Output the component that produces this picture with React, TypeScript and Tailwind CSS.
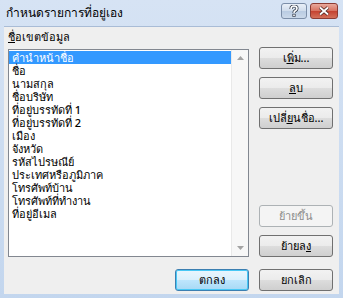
import React from "react";

const items = [
  "คำนำหน้าชื่อ",
  "ชื่อ",
  "นามสกุล",
  "ชื่อบริษัท",
  "ที่อยู่บรรทัดที่ 1",
  "ที่อยู่บรรทัดที่ 2",
  "เมือง",
  "จังหวัด",
  "รหัสไปรษณีย์",
  "ประเทศหรือภูมิภาค",
  "โทรศัพท์บ้าน",
  "โทรศัพท์ที่ทำงาน",
  "ที่อยู่อีเมล",
];

function DlgButton({
  children,
  disabled,
  isDefault,
}: {
  children: React.ReactNode;
  disabled?: boolean;
  isDefault?: boolean;
}) {
  if (disabled) {
    return (
      <div className="flex h-[22px] w-[74px] items-center justify-center rounded-[3px] border border-[#adb2b5] bg-[#f4f4f4] text-[11px] text-[#8d8d8d]">
        {children}
      </div>
    );
  }
  return (
    <div
      className={`flex h-[22px] w-[74px] items-center justify-center rounded-[3px] border text-[11px] font-medium text-black ${
        isDefault
          ? "border-[#3c7fb1] bg-[linear-gradient(#eaf6fd_0%,#d9f0fc_50%,#bee6fd_50%,#a7d9f5_100%)] shadow-[inset_0_0_0_1px_#48c8f5]"
          : "border-[#707070] bg-[linear-gradient(#f2f2f2_0%,#ebebeb_50%,#dddddd_50%,#cfcfcf_100%)]"
      }`}
    >
      {children}
    </div>
  );
}

export default function App() {
  return (
    <div
      className="flex h-[298px] w-[343px] flex-col bg-[linear-gradient(#d6e3f4,#c3d6ee)] text-black"
      style={{ fontFamily: '"Noto Sans", "DejaVu Sans", sans-serif' }}
    >
      {/* Title bar */}
      <div className="flex h-[26px] items-center justify-between pl-[6px] pr-[5px]">
        <span className="text-[12px] leading-none text-black">กำหนดรายการที่อยู่เอง</span>
        <div className="flex gap-[3px] self-start pt-[3px]">
          <div className="flex h-[16px] w-[26px] items-center justify-center rounded-[3px] border border-[#7c8ea8] bg-[linear-gradient(#e9eff7,#d0dcec_50%,#b9cbe2_50%,#cbd9ea)]">
            <svg width="10" height="12" viewBox="0 0 10 12">
              <path
                d="M2 4 Q2 1 5 1 Q8 1 8 3.5 Q8 5 6 6 Q5 6.5 5 8"
                fill="none"
                stroke="#3a4250"
                strokeWidth="3.2"
              />
              <rect x="3.4" y="8.8" width="3.2" height="3" fill="#3a4250" />
              <path
                d="M2 4 Q2 1 5 1 Q8 1 8 3.5 Q8 5 6 6 Q5 6.5 5 8"
                fill="none"
                stroke="#fff"
                strokeWidth="1.6"
              />
              <rect x="4.2" y="9.5" width="1.6" height="1.6" fill="#fff" />
            </svg>
          </div>
          <div className="flex h-[16px] w-[28px] items-center justify-center rounded-[3px] border border-[#8c3b33] bg-[linear-gradient(#e9a99c,#d7715f_50%,#c4402f_50%,#d3705a)]">
            <svg width="12" height="10" viewBox="0 0 12 10">
              <path d="M2 1.5 L10 8.5 M10 1.5 L2 8.5" stroke="#4a2420" strokeWidth="3.4" />
              <path d="M2 1.5 L10 8.5 M10 1.5 L2 8.5" stroke="#fff" strokeWidth="1.8" />
            </svg>
          </div>
        </div>
      </div>

      {/* Client area */}
      <div className="mx-[4px] mb-[4px] flex flex-1 flex-col border-t border-[#a9bcd6] bg-[#efefef] pl-[4px] pr-[6px] pt-[2px]">
        <div className="h-[18px] text-[11px] font-medium leading-[16px]">
          <u>ช</u>ื่อเขตข้อมูล
        </div>

        <div className="flex items-end gap-[10px]">
          {/* List box */}
          <div className="flex h-[208px] w-[241px] border border-[#828790] bg-white">
            <div className="flex-1 pt-[1px]">
              {items.map((it, i) => (
                <div
                  key={it}
                  className={`h-[13px] pl-[3px] text-[11px] font-medium leading-[13px] ${
                    i === 0 ? "bg-[#3399ff] text-white" : "text-black"
                  }`}
                >
                  {it}
                </div>
              ))}
            </div>
            <div className="flex w-[17px] flex-col items-center justify-between border-l border-[#e9e9e9] bg-[#f7f7f7] py-[6px]">
              <svg width="7" height="4" viewBox="0 0 7 4">
                <path d="M0 4 L3.5 0 L7 4 Z" fill="#a3a3a3" />
              </svg>
              <svg width="7" height="4" viewBox="0 0 7 4">
                <path d="M0 0 L3.5 4 L7 0 Z" fill="#a3a3a3" />
              </svg>
            </div>
          </div>

          {/* Right buttons */}
          <div className="flex h-[210px] flex-col justify-between">
            <div className="flex flex-col gap-[8px]">
              <DlgButton>
                เ<u>พิ</u>่ม...
              </DlgButton>
              <DlgButton>
                <u>ล</u>บ
              </DlgButton>
              <DlgButton>
                เปลี่<u>ย</u>นชื่อ...
              </DlgButton>
            </div>
            <div className="flex flex-col gap-[8px]">
              <DlgButton disabled>ย้ายขึ้น</DlgButton>
              <DlgButton>
                ย้ายล<u>ง</u>
              </DlgButton>
            </div>
          </div>
        </div>

        <div className="mt-[12px] flex justify-end gap-[10px]">
          <DlgButton isDefault>ตกลง</DlgButton>
          <DlgButton>ยกเลิก</DlgButton>
        </div>
      </div>
    </div>
  );
}
